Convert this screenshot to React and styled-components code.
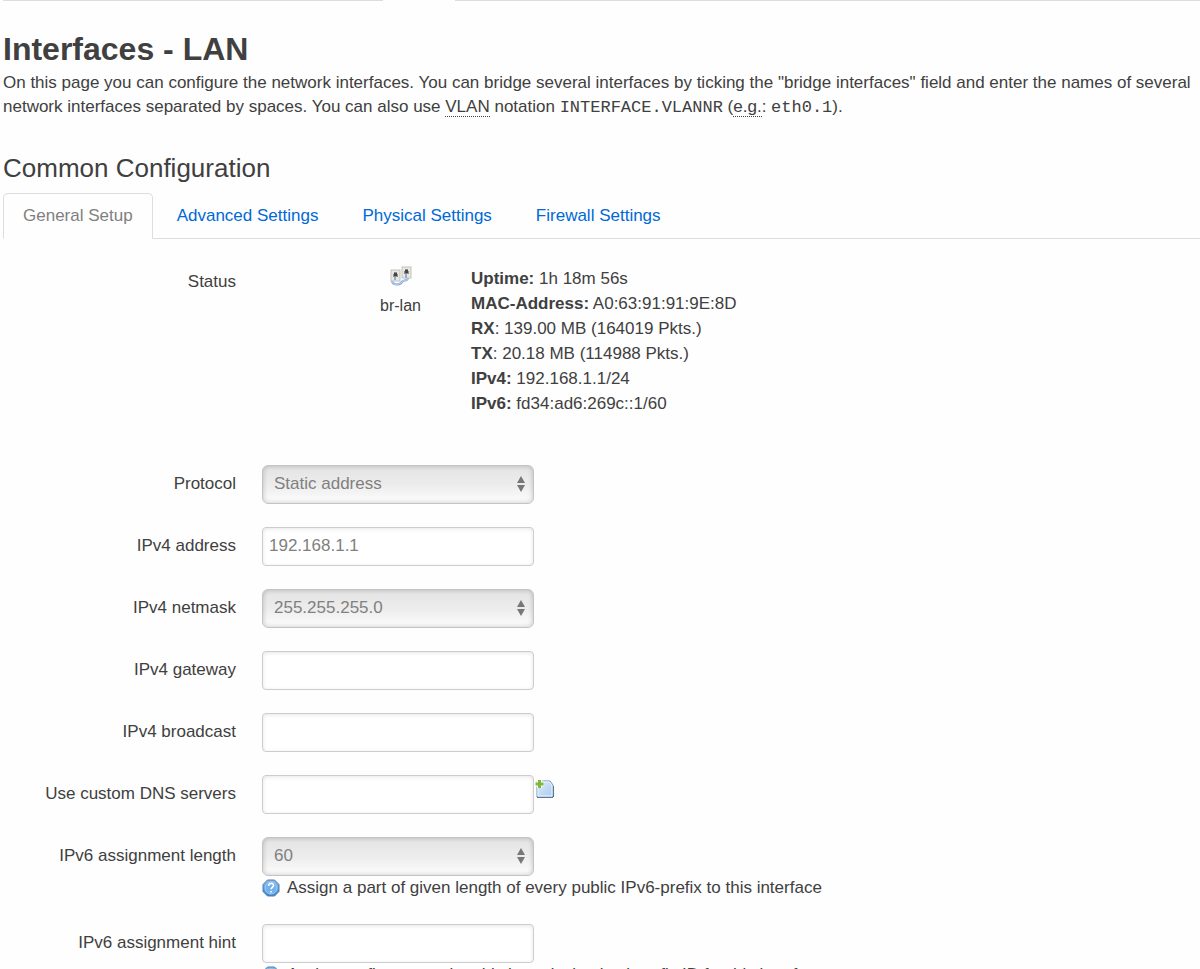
import React from 'react';
import styled, { createGlobalStyle, css } from 'styled-components';

const GlobalStyle = createGlobalStyle`
  * {
    box-sizing: border-box;
  }

  html {
    overflow: hidden;
  }

  body {
    margin: 0;
    background: #fefefe;
    color: #404040;
    font-family: 'Liberation Sans', Arial, sans-serif;
    font-size: 17px;
    line-height: 24px;
  }
`;

const Page = styled.main`
  height: 100vh;
  padding-left: 3px;
  overflow: hidden;
`;

const TopTabs = styled.div`
  display: grid;
  grid-template-columns: 380px 1fr;
  column-gap: 72px;
`;

const TopTabsRule = styled.div`
  height: 1px;
  background: #dddddd;
`;

const Title = styled.h1`
  margin: 28px 0 2px;
  font-size: 32px;
  font-weight: 700;
  line-height: 40px;
`;

const Description = styled.p`
  margin: 0;
`;

const Abbr = styled.abbr`
  border-bottom: 1px dotted #404040;
  text-decoration: none;
`;

const Mono = styled.var`
  font-family: 'Liberation Mono', monospace;
  font-style: normal;
  line-height: 1;
`;

const SectionTitle = styled.h2`
  margin: 31px 0 7px;
  font-size: 26px;
  font-weight: 400;
  line-height: 36px;
`;

const Tabs = styled.nav`
  display: flex;
  gap: 4px;
  border-bottom: 1px solid #dddddd;
`;

const Tab = styled.a`
  height: 46px;
  padding: 0 19px;
  margin-bottom: -1px;
  border: 1px solid transparent;
  border-radius: 5px 5px 0 0;
  color: #0069d6;
  line-height: 44px;
  text-decoration: none;

  ${({ $active }) =>
    $active &&
    css`
      background: #fefefe;
      border-color: #dddddd;
      border-bottom-color: #fefefe;
      color: #808080;
    `}
`;

const Form = styled.form`
  padding-top: 27px;
`;

const Row = styled.div`
  display: grid;
  grid-template-columns: 233px 1fr;
  column-gap: 26px;
  margin-bottom: 23px;
`;

const Label = styled.label`
  padding-top: 7px;
  text-align: right;
`;

const StatusRow = styled(Row)`
  margin-bottom: 49px;
`;

const StatusLabel = styled.span`
  padding-top: 4px;
  text-align: right;
`;

const Status = styled.div`
  display: flex;
  gap: 49px;
`;

const Device = styled.div`
  display: flex;
  flex-direction: column;
  align-items: center;
  gap: 8px;
  width: 43px;
  margin-left: 117px;
  font-size: 16px;
`;

const Details = styled.div`
  line-height: 25px;
`;

const Field = styled.div`
  display: flex;
`;

const control = css`
  width: 272px;
  height: 39px;
  border: 1px solid #cccccc;
  border-radius: 4px;
  color: #808080;
  font: inherit;
  outline: none;
`;

const Input = styled.input`
  ${control}
  padding: 0 6px 2px;
  background: #ffffff;
  box-shadow: inset 0 1px 4px rgba(0, 0, 0, 0.1);
`;

const SelectBox = styled.div`
  position: relative;
  width: 272px;
  height: 39px;
`;

const StyledSelect = styled.select`
  ${control}
  padding: 0 11px 2px;
  appearance: none;
  border-color: #c4c4c4;
  border-radius: 6px;
  background: linear-gradient(#e4e4e4, #ececec 50%, #fdfdfd);
  box-shadow: inset 0 0 5px rgba(0, 0, 0, 0.22);
`;

const SelectArrows = styled.svg`
  position: absolute;
  top: 11px;
  right: 9px;
  pointer-events: none;
`;

const AddButton = styled.button`
  width: 20px;
  height: 20px;
  margin: 4px 0 0 1px;
  padding: 0;
  border: 0;
  background: none;
  cursor: pointer;

  svg {
    display: block;
  }
`;

const Help = styled.p`
  display: flex;
  align-items: center;
  gap: 7px;
  margin: 0 0 1px;
`;

function DeviceIcon() {
  return (
    <svg width="22" height="20" viewBox="0 0 22 20" aria-hidden="true">
      <path d="M2 14c0 6 8 5 10 2s5 0 6-4" fill="none" stroke="#8fb0dd" strokeWidth="2.4" />
      <path d="M2 14c0 6 8 5 10 2s5 0 6-4" fill="none" stroke="#b7d0f2" strokeWidth="1" />
      <rect x="1" y="4" width="9" height="11" fill="#e8e7e2" stroke="#c2c1bc" />
      <rect x="12" y="1" width="9" height="11" fill="#e8e7e2" stroke="#c2c1bc" />
      <path d="M3 11V8h1V6h3v2h1v3z" fill="#8c8c8c" />
      <path d="M14 8V5h1V3h3v2h1v3z" fill="#8c8c8c" />
      <path d="M4 7h3v3H4zM15 4h3v3h-3z" fill="#444444" />
      <path d="M5 11v3M16 8v4" stroke="#8fb0dd" strokeWidth="2" />
    </svg>
  );
}

function AddIcon() {
  return (
    <svg width="20" height="20" viewBox="0 0 20 20" aria-hidden="true">
      <defs>
        <linearGradient id="page-fill" x1="0" y1="0" x2="1" y2="1">
          <stop offset="0" stopColor="#e0edfb" />
          <stop offset="1" stopColor="#a6caf1" />
        </linearGradient>
      </defs>
      <path d="M2 2h13l3 4v12H2z" fill="url(#page-fill)" stroke="#7692b8" strokeLinejoin="round" />
      <path d="M3 3h11.5l2.5 3.5V17H3z" fill="none" stroke="#eff6fd" />
      <path d="M2 18.5h16M18.5 7v11" stroke="#5c7594" />
      <path d="M4.5 1v8M.5 5h8" stroke="#ffffff" strokeWidth="5" />
      <path d="M4.5 1v8M.5 5h8" stroke="#7bb83c" strokeWidth="3" />
    </svg>
  );
}

function HelpIcon() {
  return (
    <svg width="18" height="18" viewBox="0 0 18 18" aria-hidden="true">
      <defs>
        <linearGradient id="help-fill" x1="0" y1="0" x2="0" y2="1">
          <stop offset="0" stopColor="#8fb9e3" />
          <stop offset="1" stopColor="#3f83c8" />
        </linearGradient>
      </defs>
      <path d="M5.5 1h7L17 5.5v7L12.5 17h-7L1 12.5v-7z" fill="url(#help-fill)" stroke="#4b80b8" strokeLinejoin="round" />
      <circle cx="9" cy="9" r="6" fill="#6fb2ee" stroke="#a5cff5" />
      <path d="M6.5 7c0-3.5 5-3.2 5-.5 0 1.8-2.4 1.8-2.4 3.8M9 12v1.6" fill="none" stroke="#ffffff" strokeWidth="1.6" />
    </svg>
  );
}

function Select({ id, value }) {
  return (
    <SelectBox>
      <StyledSelect id={id} defaultValue={value}>
        <option>{value}</option>
      </StyledSelect>
      <SelectArrows width="8" height="16" viewBox="0 0 8 16" aria-hidden="true">
        <path d="M4 0l4 7H0zM4 16l4-7H0z" fill="#777777" />
      </SelectArrows>
    </SelectBox>
  );
}

const tabs = ['General Setup', 'Advanced Settings', 'Physical Settings', 'Firewall Settings'];

const fields = [
  { id: 'proto', label: 'Protocol', type: 'select', value: 'Static address' },
  { id: 'ipaddr', label: 'IPv4 address', value: '192.168.1.1' },
  { id: 'netmask', label: 'IPv4 netmask', type: 'select', value: '255.255.255.0' },
  { id: 'gateway', label: 'IPv4 gateway' },
  { id: 'broadcast', label: 'IPv4 broadcast' },
  { id: 'dns', label: 'Use custom DNS servers', addable: true },
  {
    id: 'ip6assign',
    label: 'IPv6 assignment length',
    type: 'select',
    value: '60',
    help: 'Assign a part of given length of every public IPv6-prefix to this interface',
  },
  {
    id: 'ip6hint',
    label: 'IPv6 assignment hint',
    help: 'Assign prefix parts using this hexadecimal subprefix ID for this interface.',
  },
];

function App() {
  return (
    <>
      <GlobalStyle />
      <Page>
        <TopTabs>
          <TopTabsRule />
          <TopTabsRule />
        </TopTabs>
        <Title>Interfaces - LAN</Title>
        <Description>
          On this page you can configure the network interfaces. You can bridge several interfaces by ticking the
          "bridge interfaces" field and enter the names of several network interfaces separated by spaces. You can
          also use <Abbr title="Virtual Local Area Network">VLAN</Abbr> notation <Mono>INTERFACE.VLANNR</Mono> (
          <Abbr title="for example">e.g.</Abbr>: <Mono>eth0.1</Mono>).
        </Description>

        <SectionTitle>Common Configuration</SectionTitle>
        <Tabs>
          {tabs.map((tab, index) => (
            <Tab key={tab} href="#" $active={index === 0}>
              {tab}
            </Tab>
          ))}
        </Tabs>

        <Form>
          <StatusRow>
            <StatusLabel>Status</StatusLabel>
            <Status>
              <Device>
                <DeviceIcon />
                <div>br-lan</div>
              </Device>
              <Details>
                <strong>Uptime:</strong> 1h 18m 56s
                <br />
                <strong>MAC-Address:</strong> A0:63:91:91:9E:8D
                <br />
                <strong>RX</strong>: 139.00 MB (164019 Pkts.)
                <br />
                <strong>TX</strong>: 20.18 MB (114988 Pkts.)
                <br />
                <strong>IPv4:</strong> 192.168.1.1/24
                <br />
                <strong>IPv6:</strong> fd34:ad6:269c::1/60
              </Details>
            </Status>
          </StatusRow>

          {fields.map((field) => (
            <Row key={field.id}>
              <Label htmlFor={field.id}>{field.label}</Label>
              <div>
                <Field>
                  {field.type === 'select' ? (
                    <Select id={field.id} value={field.value} />
                  ) : (
                    <Input id={field.id} type="text" defaultValue={field.value} />
                  )}
                  {field.addable && (
                    <AddButton type="button" aria-label="Add">
                      <AddIcon />
                    </AddButton>
                  )}
                </Field>
                {field.help && (
                  <Help>
                    <HelpIcon />
                    {field.help}
                  </Help>
                )}
              </div>
            </Row>
          ))}
        </Form>
      </Page>
    </>
  );
}

export default App;
